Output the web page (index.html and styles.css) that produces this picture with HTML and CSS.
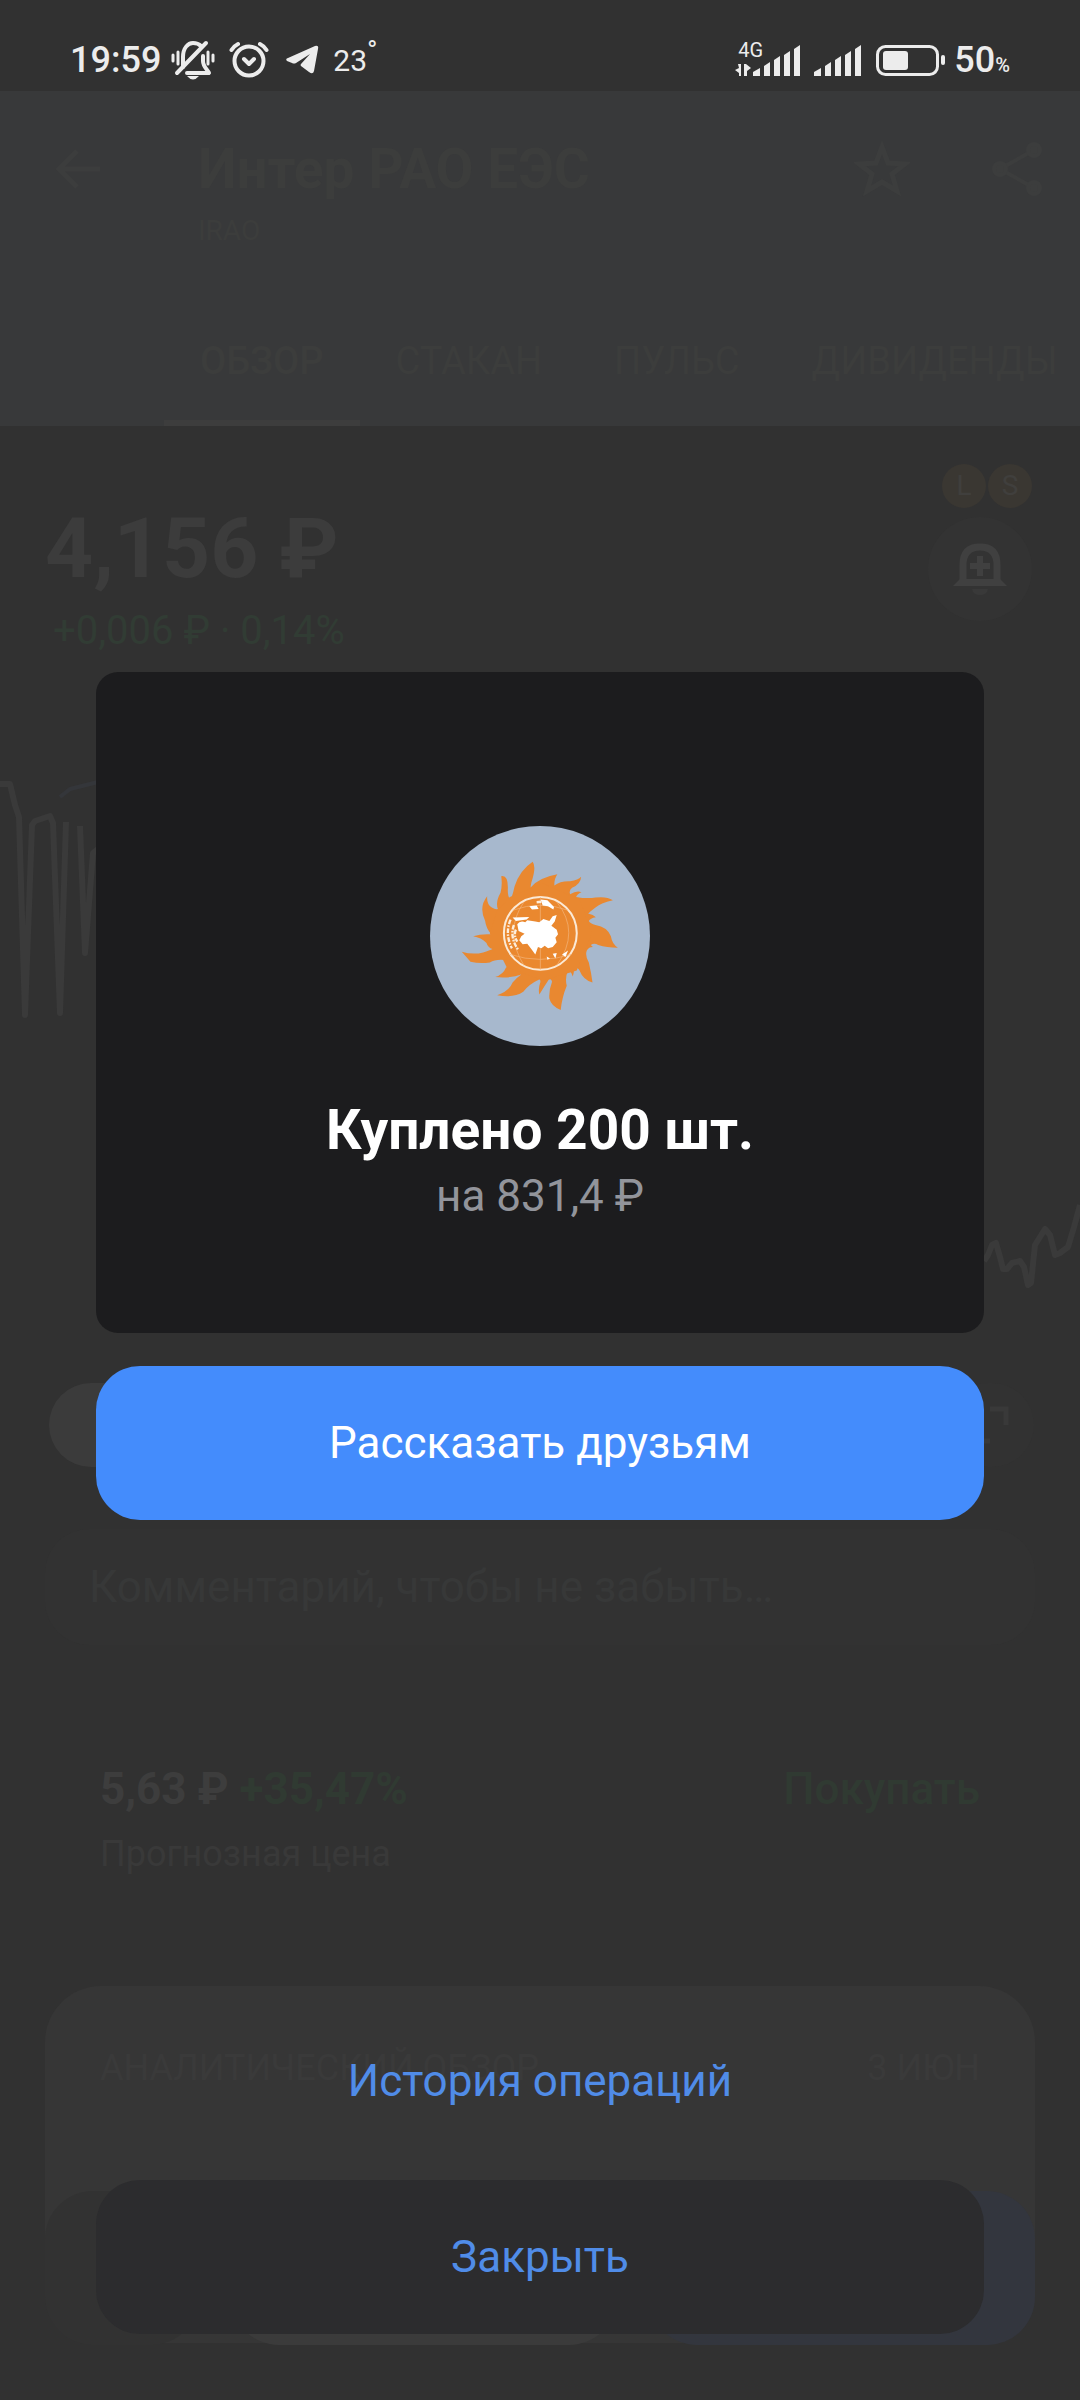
FILE: index.html
```html
<!DOCTYPE html>
<html lang="ru">
<head>
<meta charset="utf-8">
<meta name="viewport" content="width=device-width, initial-scale=1">
<title>Интер РАО ЕЭС</title>
<link rel="stylesheet" href="styles.css">
</head>
<body>
<div class="screen">
  <div class="status">
    <div class="status-side">
      <span class="clock">19:59</span>
      <svg class="ic-mute" viewBox="0 0 44 40" width="44" height="40" fill="none" stroke="#ececec" stroke-width="4" stroke-linecap="round">
        <path d="M12 27V17C12 8 17 3 22 3C26 3 28 4 30 6M32 16V21C32 27 37 30 38 33H16" stroke-linejoin="round"/>
        <path d="M6 33L35 3"/>
        <path d="M2 15V21M7 12V24M37 12V24M42 15V21" stroke-width="3"/>
        <path d="M16 36H28Q22 43 16 36Z" fill="#ececec" stroke="none"/>
      </svg>
      <svg class="ic-alarm" viewBox="0 0 40 38" width="40" height="38" fill="none" stroke="#ececec" stroke-width="4" stroke-linecap="round" stroke-linejoin="round">
        <circle cx="20" cy="20" r="14.500"/>
        <path d="M2.500 9Q5 5 9 3M31 3Q35 5 37.500 9M15 18L20 23L25 18"/>
      </svg>
      <svg class="ic-plane" viewBox="0 0 34 32" width="34" height="32" fill="#ececec">
        <path d="M3 14L30 2Q34 1 33 5L29 27Q28 31 24 28L16 22Q15 21 16 20L25 10L11 19Q9 20 7 19L2 17Q0 15 3 14Z"/>
      </svg>
      <span class="temp">23<sup class="deg">°</sup></span>
    </div>
    <div class="status-side">
      <span class="net">
        <span class="net-type">4G</span>
        <svg viewBox="0 0 68 32" width="68" height="32" fill="#ececec">
          <path d="M4 20H7V32H5V29L1 26L5 24ZM10 20H12L17 24L13 27V32H10Z"/>
          <path d="M19 28L26 24V32H19ZM30 22L36 18V32H30ZM40 16L46 12V32H40ZM50 11L56 7V32H50ZM60 5L66 1V32H60Z"/>
        </svg>
      </span>
      <svg class="ic-signal" viewBox="0 0 48 32" width="48" height="32" fill="#ececec">
        <path d="M0 28L7 24V32H0ZM11 22L17 18V32H11ZM21 16L27 12V32H21ZM31 11L37 7V32H31ZM41 5L47 1V32H41Z"/>
      </svg>
      <svg class="ic-battery" viewBox="0 0 70 32" width="70" height="32">
        <rect x="1.500" y="2.500" width="60" height="28" rx="8" fill="none" stroke="#ececec" stroke-width="3"/>
        <rect x="7" y="7" width="25" height="19" rx="3" fill="#ececec"/>
        <rect x="65" y="11" width="4" height="10" rx="2" fill="#ececec"/>
      </svg>
      <span class="charge">50<small class="pct">%</small></span>
    </div>
  </div>

  <header class="header" inert>
    <div class="header-row">
      <button class="icon-btn" aria-label="Назад">
        <svg viewBox="0 0 56 56" width="56" height="56" fill="none" stroke="#3c3d3d" stroke-width="5"><path d="M50 28H10M27 10L9 28L27 46"/></svg>
      </button>
      <div class="heading">
        <h1 class="title">Интер РАО ЕЭС</h1>
        <p class="ticker">IRAO</p>
      </div>
      <button class="icon-btn" aria-label="В избранное">
        <svg viewBox="0 0 56 56" width="56" height="56" fill="none" stroke="#3c3d3d" stroke-width="5"><path d="M28 6L34 22L51 23L38 33L43 50L28 41L13 50L18 33L5 23L22 22Z"/></svg>
      </button>
      <button class="icon-btn" aria-label="Поделиться">
        <svg viewBox="0 0 56 56" width="56" height="56" fill="#3c3d3d" stroke="#3c3d3d" stroke-width="4"><path d="M46 9L12 28L46 47" fill="none"/><circle cx="46" cy="9" r="6"/><circle cx="12" cy="28" r="6"/><circle cx="46" cy="47" r="6"/></svg>
      </button>
    </div>
    <nav class="tabs">
      <a class="tab tab-active" href="#overview">ОБЗОР</a>
      <a class="tab" href="#book">СТАКАН</a>
      <a class="tab" href="#pulse">ПУЛЬС</a>
      <a class="tab" href="#dividends">ДИВИДЕНДЫ</a>
    </nav>
  </header>

  <main class="content" id="overview" inert>
    <section class="quote">
      <div class="quote-text">
        <p class="price">4,156 ₽</p>
        <p class="change">+0,006 ₽ · 0,14%</p>
      </div>
      <div class="quote-side">
        <div class="badges"><span class="badge">L</span><span class="badge">S</span></div>
        <button class="bell" aria-label="Уведомить о цене">
          <svg viewBox="0 0 56 56" width="56" height="56" fill="none" stroke="#404040" stroke-width="7"><path d="M11 42V24Q11 6 28 6Q45 6 45 24V42" /><path d="M1 45L8 38H48L55 45Z" fill="#404040" stroke="none"/><path d="M28 15V35M18 25H38" stroke-width="6"/><path d="M20 48H36Q35 54 28 54Q21 54 20 48Z" fill="#393939" stroke="none"/></svg>
        </button>
      </div>
    </section>
    <svg class="chart" viewBox="0 0 1080 728" preserveAspectRatio="none" fill="none" stroke="#3a3a3a" stroke-width="6" stroke-linejoin="round">
      <path d="M0 129H10L15 150L19 162L25 360L32 170L35 166L50 161L53 168L60 358L66 167M80 171L85 298L93 198L98 194"/>
      <path d="M60 142L70 134L98 127" stroke="#34363a" stroke-width="4"/>
      <path d="M984 606L988 600L992 590L996 588L1000 602L1003 614L1007 614L1012 608L1020 606L1024 612L1028 630L1031 628L1035 590L1040 582L1045 574L1050 580L1055 600L1060 598L1068 592L1074 572L1080 550"/>
    </svg>
    <div class="ranges">
      <button class="range" aria-label="День"></button>
      <button class="expand" aria-label="На весь экран">
        <svg viewBox="0 0 44 44" width="44" height="44" fill="none" stroke="#393939" stroke-width="5"><path d="M22 6H38V22M6 22V38H22"/></svg>
      </button>
    </div>
    <input class="note" type="text" aria-label="Комментарий" placeholder="Комментарий, чтобы не забыть…">
    <section class="forecast">
      <div class="forecast-row">
        <p><span class="target">5,63 ₽</span> <span class="rise">+35,47%</span></p>
        <p class="rise">Покупать</p>
      </div>
      <p class="caption">Прогнозная цена</p>
    </section>
    <article class="review">
      <span>АНАЛИТИЧЕСКИЙ ОБЗОР</span>
      <time datetime="--06-03">3 ИЮН</time>
    </article>
  </main>
  <div class="trade" inert>
    <button class="trade-btn trade-more" aria-label="Ещё"></button>
    <button class="trade-btn trade-sell" aria-label="Продать"></button>
    <button class="trade-btn trade-buy" aria-label="Купить"></button>
  </div>

  <div class="overlay" role="dialog" aria-labelledby="result">
    <section class="result">
      <svg class="logo" viewBox="61 78 658 658" width="220" height="220">
        <circle cx="390" cy="407" r="329" fill="#a7b8cd"/>
        <path fill="#e98830" d="M368 185Q380 200 364 248Q362 258 362 262Q385 232 442 222Q432 236 433 256Q450 242 480 243Q505 240 513 230Q512 252 486 263Q476 270 480 282Q500 270 514 276Q500 282 498 290Q530 296 556 292Q590 288 608 300Q570 308 556 322Q538 336 534 340Q550 344 557 351Q540 354 536 362Q540 370 556 374Q592 380 602 408Q606 432 623 442Q590 442 564 434Q552 426 542 434L548 440Q536 440 530 450Q524 466 536 486Q544 520 547 546Q520 540 507 508Q500 498 490 496Q494 512 488 528Q482 508 474 512Q464 530 470 556Q456 590 452 628Q424 618 418 594Q416 570 426 544Q424 532 416 538Q404 556 388 582Q384 564 391 545Q392 535 386 538Q356 552 340 574Q310 594 262 584Q298 572 308 546Q322 530 334 522Q306 534 256 530Q280 522 288 502Q300 492 306 482Q262 472 240 486Q210 490 182 484Q170 470 156 454Q190 464 220 456Q240 450 248 446Q234 442 230 428Q214 412 190 408Q214 400 244 402Q228 382 226 362Q206 320 232 288Q230 312 246 322Q258 330 264 326Q256 306 272 278Q278 252 274 228Q294 224 294 262Q292 290 302 297Q308 286 314 258Q330 210 368 185Z"/>
        <path fill="#e98830" d="M262 330L300 290L400 250L510 300L545 400L500 510L400 540L290 500L240 400Z"/>
        <circle cx="391" cy="399" r="109" fill="#ea882f" stroke="#fbe9d5" stroke-width="6"/>
        <g fill="none" stroke="#f3b67c" stroke-width="2">
          <path d="M391 290V508M308 330Q391 300 474 330M300 462Q391 492 484 462M440 305Q512 395 440 495M342 305Q280 395 342 495"/>
        </g>
        <g fill="#fff">
          <path d="M322 372Q330 360 346 366L352 360L376 364L388 366L400 356L418 362L428 348L440 344L434 364L424 376L440 388L444 402L436 412L440 426L428 440L414 444L404 436L394 444L384 440L376 462L364 446L352 430L338 432L328 420L334 408L344 400L326 392Z"/>
          <path d="M392 298L412 300L432 320L430 328L414 318L398 316ZM358 318L380 316L386 326L366 328ZM308 352L358 350L350 358L318 362ZM410 468L420 474L412 478ZM428 460L440 458L436 474ZM456 462L474 450L466 470Z"/>
        </g>
        <path d="M302 358Q284 400 306 444M312 374Q298 410 326 450M318 388Q310 404 322 424M380 306L400 304" fill="none" stroke="#fdeedd" stroke-width="7" stroke-dasharray="14 4 5 4"/>
      </svg>
      <h2 class="result-title" id="result">Куплено 200 шт.</h2>
      <p class="result-sum">на 831,4 ₽</p>
    </section>
    <button class="btn btn-primary">Рассказать друзьям</button>
    <a class="history" href="#history">История операций</a>
    <button class="btn btn-close">Закрыть</button>
  </div>
</div>
</body>
</html>
```
FILE: styles.css
```css
* { box-sizing: border-box; }

body {
  margin: 0;
  background: #313131;
  color: #3a3a3a;
  font-family: Roboto, "Noto Sans", sans-serif;
}

h1, h2, p { margin: 0; }

button, input {
  margin: 0;
  padding: 0;
  border: 0;
  background: none;
  font: inherit;
}

a { text-decoration: none; }
svg { display: block; flex-shrink: 0; }

.screen {
  position: relative;
  min-height: 100vh;
}

/* System status bar */
.status {
  display: flex;
  justify-content: space-between;
  height: 91px;
  padding: 28px 70px 0;
  color: #ececec;
}

.status-side {
  display: flex;
  align-items: center;
  height: 64px;
}

.clock, .charge {
  font-size: 36px;
  font-weight: 500;
}

.ic-mute { margin-left: 10px; }
.ic-alarm { margin-left: 14px; }
.ic-plane { margin-left: 16px; }

.temp {
  margin-left: 14px;
  font-size: 30px;
}

.deg {
  font-size: 28px;
  line-height: 0;
}

.net { position: relative; }

.net-type {
  position: absolute;
  left: 4px;
  top: -4px;
  font-size: 20px;
  line-height: 20px;
}

.ic-signal { margin-left: 12px; }
.ic-battery { margin-left: 14px; }
.charge { margin-left: 8px; }

.pct {
  font-size: 20px;
}

/* Instrument header */
.header {
  padding-top: 46px;
  background: #38393a;
  color: #3c3d3c;
}

.header-row {
  display: flex;
  align-items: flex-start;
  gap: 78px;
  padding: 0 36px 0 50px;
}

.icon-btn {
  width: 56px;
  height: 64px;
  color: inherit;
}

.heading {
  flex: 1;
  min-width: 0;
  padding-left: 14px;
}

.title {
  font-size: 55px;
  line-height: 64px;
  font-weight: 700;
  white-space: nowrap;
}

.ticker {
  margin-top: 12px;
  font-size: 28px;
  line-height: 36px;
}

.tabs {
  display: flex;
  padding-left: 164px;
  margin-top: 92px;
  overflow: hidden;
}

.tab {
  padding: 0 36px 39px;
  border-bottom: 6px solid transparent;
  color: #3c3d3c;
  font-size: 38px;
  line-height: 40px;
}

.tab-active {
  border-color: #3d3d3d;
  font-weight: 500;
}

/* Price */
.content { padding-bottom: 56px; }

.quote {
  display: flex;
  justify-content: space-between;
  padding: 38px 48px 0 45px;
}

.quote-text { padding-top: 35px; }

.price {
  color: #3c3c3c;
  font-size: 84px;
  line-height: 100px;
  font-weight: 700;
}

.change {
  margin: 8px 0 0 8px;
  color: #313c34;
  font-size: 40px;
  line-height: 48px;
}

.quote-side {
  display: flex;
  flex-direction: column;
  align-items: flex-end;
  gap: 9px;
}

.badges { display: flex; gap: 2px; }

.badge {
  width: 44px;
  height: 44px;
  border-radius: 50%;
  background: #3a3732;
  color: #403f3d;
  font-size: 28px;
  line-height: 44px;
  text-align: center;
}

.bell {
  display: grid;
  place-items: center;
  width: 104px;
  height: 104px;
  border-radius: 50%;
  background: #333333;
}

.chart {
  width: 100%;
  height: 728px;
}

.ranges {
  display: flex;
  justify-content: space-between;
  padding: 0 46px 0 49px;
}

.range {
  width: 150px;
  height: 84px;
  border-radius: 42px;
  background: #3b3b3b;
}

.expand {
  display: grid;
  place-items: center;
  width: 88px;
  height: 84px;
  border-radius: 42px;
  background: #323232;
}

.note {
  display: block;
  width: calc(100% - 90px);
  height: 116px;
  margin: 62px 45px 0;
  padding: 0 44px;
  border-radius: 44px;
  background: #323232;
  font-size: 44px;
}

.note::placeholder { color: #373838; opacity: 1; }

.forecast { padding: 118px 100px 0; }

.forecast-row {
  display: flex;
  justify-content: space-between;
  font-size: 44px;
  line-height: 52px;
  font-weight: 500;
}

.target { color: #3d3d3d; font-weight: 700; }
.rise { color: #303a32; }
.target + .rise { font-weight: 700; }

.caption {
  margin-top: 17px;
  color: #393939;
  font-size: 36px;
  line-height: 44px;
}

.review {
  display: flex;
  justify-content: space-between;
  min-height: 357px;
  margin: 110px 45px 0;
  padding: 64px 55px;
  border-radius: 56px;
  background: #363636;
  color: #3a3a3a;
  font-size: 36px;
  line-height: 36px;
}

/* Trade buttons pinned above the page bottom */
.trade {
  position: absolute;
  left: 45px;
  right: 45px;
  bottom: 55px;
  display: flex;
  gap: 32px;
}

.trade-btn {
  flex: 1;
  height: 154px;
  border-radius: 48px;
}

.trade-more { flex: 0 0 154px; background: #323232; }
.trade-sell { background: #3b3b3b; }
.trade-buy { background: #33363e; }

/* Purchase result */
.overlay {
  position: absolute;
  inset: 0;
  display: flex;
  flex-direction: column;
  padding: 672px 96px 66px;
}

.result {
  display: flex;
  flex-direction: column;
  align-items: center;
  padding: 154px 24px 111px;
  border-radius: 22px;
  background: #1c1c1e;
}

.result-title {
  margin-top: 52px;
  color: #ffffff;
  font-size: 55px;
  line-height: 64px;
  font-weight: 700;
}

.result-sum {
  margin-top: 8px;
  color: #92949b;
  font-size: 44px;
  line-height: 52px;
}

.btn {
  height: 154px;
  border-radius: 44px;
  font-size: 44px;
}

.btn-primary {
  margin-top: 33px;
  background: #448cfc;
  color: #ffffff;
}

.history {
  margin-top: auto;
  padding-bottom: 73px;
  color: #508ce8;
  font-size: 44px;
  line-height: 52px;
  text-align: center;
}

.btn-close {
  background: #2c2c2e;
  color: #508ce8;
}
```
